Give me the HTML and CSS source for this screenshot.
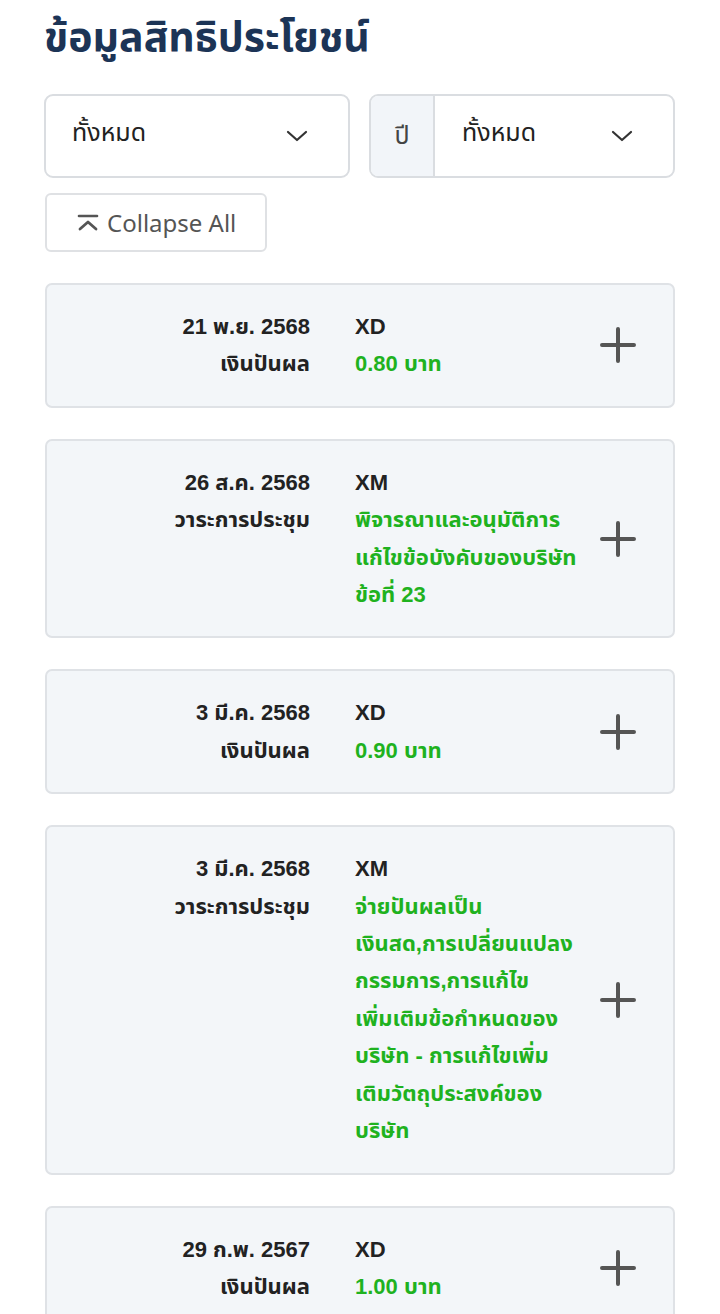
FILE: index.html
```html
<!DOCTYPE html>
<html lang="th">
<head>
  <meta charset="UTF-8" />
  <meta name="viewport" content="width=device-width, initial-scale=1.0"/>
  <title>ข้อมูลสิทธิประโยชน์</title>
  <link rel="stylesheet" href="styles.css">
</head>
<body>
  <main class="page">
    <h1 class="title">ข้อมูลสิทธิประโยชน์</h1>

    <div class="filters">
      <div class="select">
        <span class="select-value">ทั้งหมด</span>
        <svg class="chevron" width="22" height="12" viewBox="0 0 22 12"><path d="M2 2l9 8 9-8" fill="none" stroke="#333" stroke-width="2.2" stroke-linecap="round" stroke-linejoin="round"/></svg>
      </div>
      <div class="select select-group">
        <span class="select-prefix">ปี</span>
        <span class="select-value">ทั้งหมด</span>
        <svg class="chevron" width="22" height="12" viewBox="0 0 22 12"><path d="M2 2l9 8 9-8" fill="none" stroke="#333" stroke-width="2.2" stroke-linecap="round" stroke-linejoin="round"/></svg>
      </div>
    </div>

    <button class="collapse-btn" type="button">
      <svg width="22" height="18" viewBox="0 0 22 18"><path d="M2 2h18" stroke="#555" stroke-width="2.6" stroke-linecap="round"/><path d="M3 15l8-7 8 7" fill="none" stroke="#555" stroke-width="2.8" stroke-linecap="round" stroke-linejoin="round"/></svg>
      Collapse All
    </button>

    <div class="list">
      <div class="card">
        <div class="card-left">
          <div>21 พ.ย. 2568</div>
          <div>เงินปันผล</div>
        </div>
        <div class="card-right">
          <div>XD</div>
          <div class="green">0.80 บาท</div>
        </div>
        <svg class="plus" width="36" height="36" viewBox="0 0 36 36"><path d="M18 2v32M2 18h32" stroke="#555" stroke-width="4" stroke-linecap="round"/></svg>
      </div>

      <div class="card">
        <div class="card-left">
          <div>26 ส.ค. 2568</div>
          <div>วาระการประชุม</div>
        </div>
        <div class="card-right">
          <div>XM</div>
          <div class="green">พิจารณาและอนุมัติการแก้ไขข้อบังคับของบริษัท ข้อที่ 23</div>
        </div>
        <svg class="plus" width="36" height="36" viewBox="0 0 36 36"><path d="M18 2v32M2 18h32" stroke="#555" stroke-width="4" stroke-linecap="round"/></svg>
      </div>

      <div class="card">
        <div class="card-left">
          <div>3 มี.ค. 2568</div>
          <div>เงินปันผล</div>
        </div>
        <div class="card-right">
          <div>XD</div>
          <div class="green">0.90 บาท</div>
        </div>
        <svg class="plus" width="36" height="36" viewBox="0 0 36 36"><path d="M18 2v32M2 18h32" stroke="#555" stroke-width="4" stroke-linecap="round"/></svg>
      </div>

      <div class="card">
        <div class="card-left">
          <div>3 มี.ค. 2568</div>
          <div>วาระการประชุม</div>
        </div>
        <div class="card-right">
          <div>XM</div>
          <div class="green">จ่ายปันผลเป็น<br>เงินสด,การเปลี่ยนแปลง<br>กรรมการ,การแก้ไข<br>เพิ่มเติมข้อกำหนดของ<br>บริษัท - การแก้ไขเพิ่ม<br>เติมวัตถุประสงค์ของ<br>บริษัท</div>
        </div>
        <svg class="plus" width="36" height="36" viewBox="0 0 36 36"><path d="M18 2v32M2 18h32" stroke="#555" stroke-width="4" stroke-linecap="round"/></svg>
      </div>

      <div class="card">
        <div class="card-left">
          <div>29 ก.พ. 2567</div>
          <div>เงินปันผล</div>
        </div>
        <div class="card-right">
          <div>XD</div>
          <div class="green">1.00 บาท</div>
        </div>
        <svg class="plus" width="36" height="36" viewBox="0 0 36 36"><path d="M18 2v32M2 18h32" stroke="#555" stroke-width="4" stroke-linecap="round"/></svg>
      </div>
    </div>
  </main>
</body>
</html>
```

FILE: styles.css
```css
body {
  margin: 0;
  background-color: #fff;
  font-family: "Noto Sans", "Noto Sans Thai", sans-serif;
  color: #222;
}

.page {
  padding: 0 45px 0 44px;
}

.title {
  margin: 0;
  padding-top: 2px;
  font-size: 41px;
  line-height: 66px;
  font-weight: 700;
  color: #1c3456;
}

.filters {
  display: grid;
  grid-template-columns: 1fr 1fr;
  gap: 19px;
  margin-top: 26px;
}

.select {
  display: flex;
  align-items: center;
  height: 84px;
  box-sizing: border-box;
  border: 2px solid #dadde1;
  border-radius: 9px;
  padding: 0 40px 0 26px;
  font-size: 25px;
  color: #222;
}

.select-value {
  flex: 1;
  margin-top: -6px;
}

.chevron {
  margin-left: 10px;
}

.select-group {
  padding-left: 0;
  padding-right: 40px;
}

.select-group .select-prefix {
  display: flex;
  align-items: center;
  justify-content: center;
  width: 62px;
  height: 100%;
  margin-right: 27px;
  background-color: #f2f5f9;
  border-right: 2px solid #dadde1;
  border-radius: 7px 0 0 7px;
  color: #444;
}

.collapse-btn {
  display: flex;
  align-items: center;
  gap: 8px;
  margin-top: 15px;
  margin-left: 1px;
  height: 59px;
  padding: 0 29px 0 30px;
  background-color: #fff;
  border: 2px solid #dfe1e4;
  border-radius: 6px;
  font-family: inherit;
  font-size: 24px;
  color: #555;
}

.list {
  display: flex;
  flex-direction: column;
  gap: 31px;
  margin-top: 31px;
  margin-left: 1px;
}

.card {
  display: grid;
  grid-template-columns: 263px 232px 36px;
  column-gap: 45px;
  align-items: center;
  padding: 23px 40px 23px 0;
  background-color: #f3f6f9;
  border: 2px solid #dfe2e6;
  border-radius: 7px;
  font-family: "Liberation Sans", "Noto Sans Thai", sans-serif;
  font-size: 22px;
  font-weight: 700;
  line-height: 37.4px;
}

.card-left {
  align-self: start;
  text-align: right;
}

.card-right {
  align-self: start;
}

.plus {
  margin-left: -32px;
}

.green {
  color: #1fb21f;
}
```
